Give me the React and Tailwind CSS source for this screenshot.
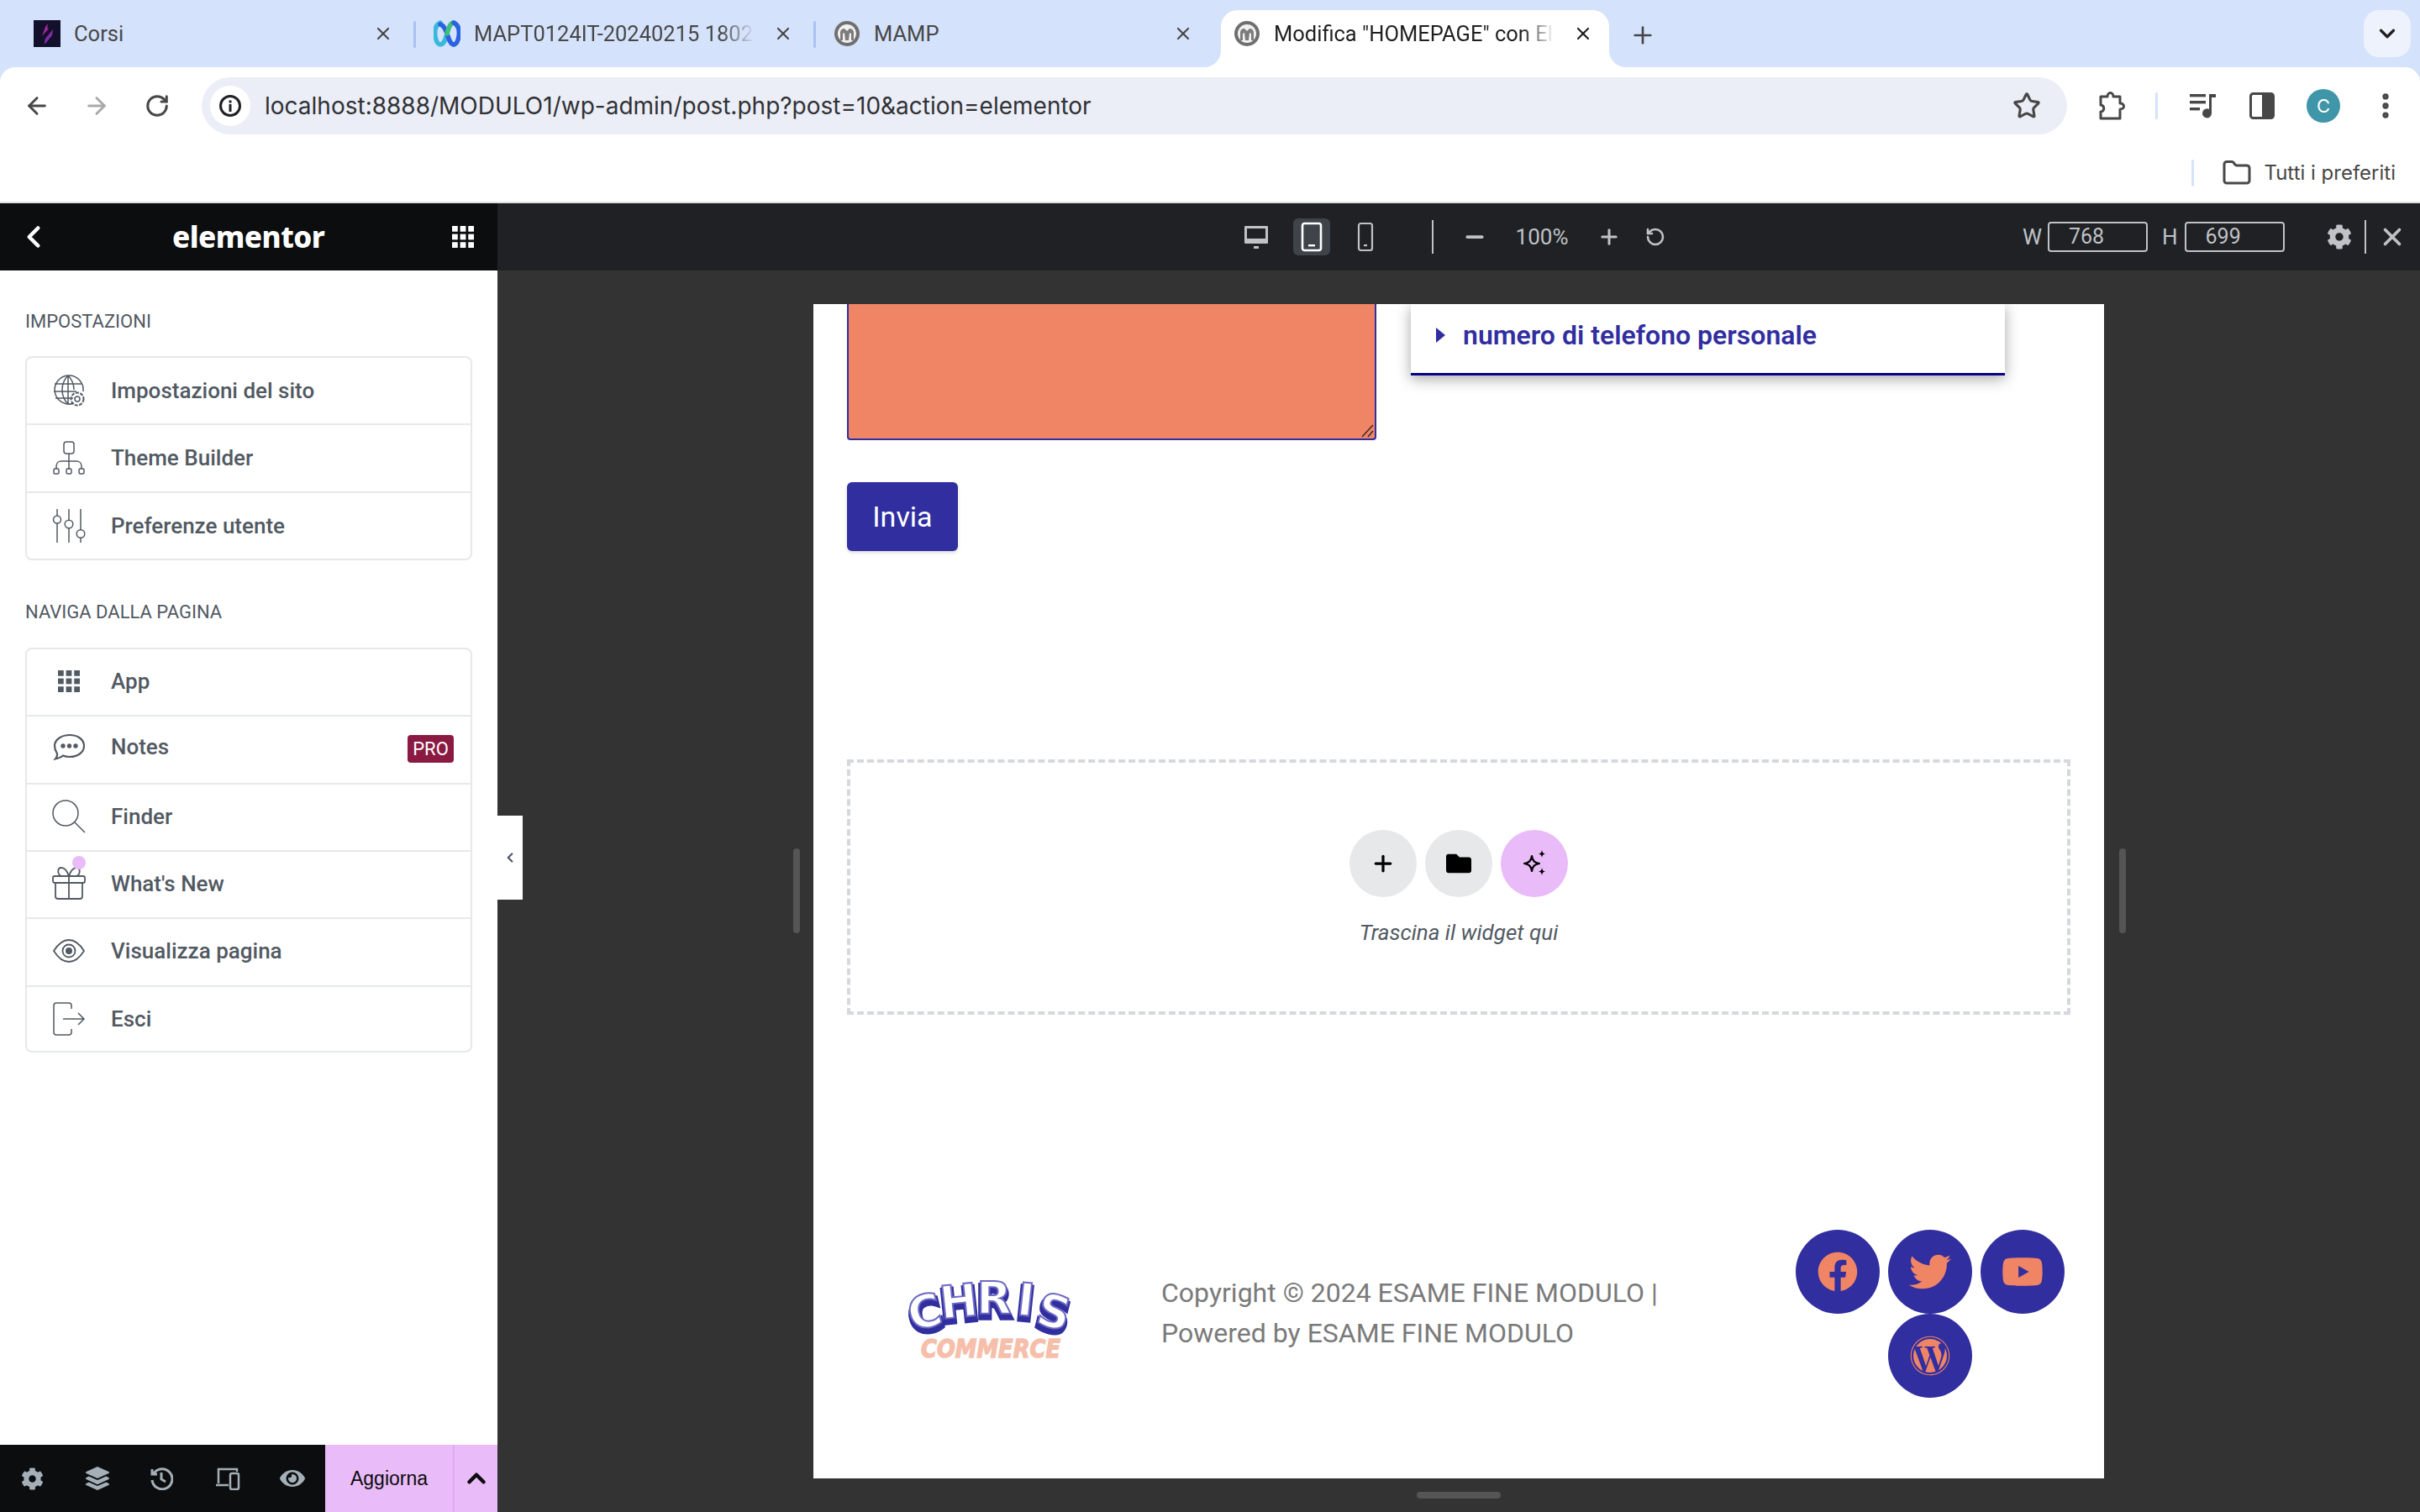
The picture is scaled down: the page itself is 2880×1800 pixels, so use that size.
import { ArrowLeft, ArrowRight, RotateCw, Star, ChevronDown, ChevronLeft, ChevronUp, Plus, Minus, X, RotateCcw, MoreVertical, Folder } from 'lucide-react'
import { FaFacebook, FaTwitter, FaYoutube, FaWordpress, FaFolder, FaCog, FaEye, FaLayerGroup } from 'react-icons/fa'

function CorsiIcon() {
  return (
    <svg width="32" height="32" viewBox="0 0 32 32">
      <rect width="32" height="32" fill="#12102a" />
      <path d="M14 8l3-4-1 7-6 8zM23 11l-1 7-9 11 1-7zM15 9l3 1-8 9z" fill="#a3299c" />
      <path d="M22 13l-1 6-8 9 1-6z" fill="#7a2bb0" />
    </svg>
  )
}

function WebexIcon() {
  return (
    <svg width="32" height="32" viewBox="0 0 32 32" fill="none">
      <path d="M8 3C2 6 1 12 2 19c1 6 3 10 6 10 4 0 6-5 8-13" stroke="#38b8dc" strokeWidth="5.500" strokeLinecap="round" />
      <path d="M8 5c4 1 6 5 8 11 2 6 4 13 8 13" stroke="#2a62e2" strokeWidth="5.500" strokeLinecap="round" />
      <path d="M16 16c2-7 4-13 8-13" stroke="#3fc07a" strokeWidth="5.500" strokeLinecap="round" />
      <path d="M24 3c6 3 7 9 6 16-1 6-3 10-6 10" stroke="#2a62e2" strokeWidth="5.500" strokeLinecap="round" />
    </svg>
  )
}

function MampIcon() {
  return (
    <svg width="32" height="32" viewBox="0 0 32 32">
      <circle cx="16" cy="16" r="15" fill="#6f6f6f" />
      <circle cx="16" cy="16" r="11" fill="#f1f1f1" />
      <path d="M8 24v-9c0-4 3-5 5-5l3 3 3-3c2 0 5 1 5 5v9h-3v-8l-2-1-1 9h-4l-1-9-2 1v8z" fill="#7c7c7c" />
    </svg>
  )
}

function Tab({ icon, title, active, fade }) {
  return (
    <div className={`relative flex h-[68px] w-[462px] shrink-0 items-start rounded-t-[20px] pl-[15px] pt-[12px] ${active ? 'bg-white text-[#1f1f1f]' : 'text-[#474747]'}`}>
      {active && (
        <>
          <div className="absolute bottom-0 left-[-20px] h-[20px] w-[20px] bg-white">
            <div className="h-full w-full rounded-br-[20px] bg-[#d5e2fb]" />
          </div>
          <div className="absolute bottom-0 right-[-20px] h-[20px] w-[20px] bg-white">
            <div className="h-full w-full rounded-bl-[20px] bg-[#d5e2fb]" />
          </div>
        </>
      )}
      <div className="flex h-[32px] w-[32px] shrink-0 items-center justify-center">{icon}</div>
      <div className={`ml-[16px] h-[32px] w-[334px] overflow-hidden whitespace-nowrap text-[25.5px] leading-[32px] ${fade ? '[mask-image:linear-gradient(to_right,black_88%,transparent)]' : ''}`}>{title}</div>
      <X className="ml-[22px] mt-[4px] shrink-0" size={24} strokeWidth={2.2} />
    </div>
  )
}

function TabDivider({ hidden }) {
  return <div className={`ml-[5px] mr-[6px] mt-[13px] h-[32px] w-[3px] shrink-0 rounded ${hidden ? '' : 'bg-[#a8c3f0]'}`} />
}

function TabStrip() {
  return (
    <div className="flex h-[80px] pl-[25px] pt-[12px]">
      <Tab icon={<CorsiIcon />} title="Corsi" />
      <TabDivider />
      <Tab icon={<WebexIcon />} title="MAPT0124IT-20240215 1802 - Webex" fade />
      <TabDivider />
      <Tab icon={<MampIcon />} title="MAMP" />
      <TabDivider hidden />
      <Tab icon={<MampIcon />} title={'Modifica "HOMEPAGE" con Elementor'} active fade />
      <Plus className="ml-[24px] mt-[14px] text-[#474747]" size={32} strokeWidth={2} />
      <div className="ml-auto mr-[11px] flex h-[56px] w-[56px] items-center justify-center rounded-[18px] bg-[#edf2fc]">
        <ChevronDown size={30} strokeWidth={2.6} className="text-[#1f1f1f]" />
      </div>
    </div>
  )
}

function Toolbar() {
  return (
    <div className="flex h-[80px] items-start rounded-t-[18px] bg-white pt-[12px] text-[#474747]">
      <div className="flex h-[68px] w-[240px] shrink-0 items-center">
        <ArrowLeft className="ml-[28px]" size={32} strokeWidth={2.2} />
        <ArrowRight className="ml-[39px] text-[#a9a9a9]" size={32} strokeWidth={2.2} />
        <RotateCw className="ml-[41px]" size={30} strokeWidth={2.4} />
      </div>
      <div className="flex h-[68px] w-[2220px] shrink-0 items-center rounded-full bg-[#ebeef7] pl-[10px]">
        <div className="flex h-[48px] w-[48px] items-center justify-center rounded-full bg-white">
          <svg width="28" height="28" viewBox="0 0 28 28" fill="none">
            <circle cx="14" cy="14" r="11.5" stroke="#202124" strokeWidth="3" />
            <rect x="12.5" y="12" width="3" height="9" fill="#202124" />
            <rect x="12.5" y="7.5" width="3" height="3" fill="#202124" />
          </svg>
        </div>
        <span className="ml-[17px] font-[Inter] text-[28px] text-[#303134]">localhost:8888/MODULO1/wp-admin/post.php?post=10&amp;action=elementor</span>
        <Star className="ml-auto mr-[31px]" size={34} strokeWidth={2.2} />
      </div>
      <div className="ml-[37px] mt-[14px] flex items-center">
        <svg width="34" height="36" viewBox="0 0 34 36" fill="none" stroke="#474747" strokeWidth="3" strokeLinejoin="round">
          <path d="M3 7h8c0-6 7-6 7 0h8v8c6 0 6 7 0 7v11H3v-8c5 0 5-8 0-8z" />
        </svg>
        <div className="ml-[34px] h-[32px] w-[3px] rounded bg-[#d5e2fb]" />
        <svg className="ml-[36px]" width="34" height="36" viewBox="0 0 34 36" fill="#474747">
          <rect x="2" y="4" width="19" height="3.4" />
          <rect x="2" y="12" width="19" height="3.4" />
          <rect x="2" y="20" width="12" height="3.4" />
          <path d="M25 4h8v4h-5v19a5.5 5.5 0 1 1-3-5z" />
        </svg>
        <svg className="ml-[39px]" width="30" height="32" viewBox="0 0 30 32">
          <rect x="1.5" y="1.5" width="27" height="29" rx="3" fill="none" stroke="#474747" strokeWidth="3" />
          <rect x="15" y="1.5" width="13.5" height="29" fill="#474747" />
        </svg>
        <div className="ml-[38px] flex h-[40px] w-[40px] items-center justify-center rounded-full bg-[#3f96a8] font-[Inter] text-[22px] text-white">C</div>
        <MoreVertical className="ml-[35px]" size={38} strokeWidth={2.6} />
      </div>
    </div>
  )
}

function BookmarksBar() {
  return (
    <div className="flex h-[80px] items-center justify-end bg-white pr-[29px] pt-[12px] text-[#474747]">
      <div className="h-[32px] w-[3px] rounded bg-[#d5e2fb]" />
      <Folder className="ml-[33px]" size={36} strokeWidth={2} />
      <span className="ml-[14px] font-[Inter] text-[24px] leading-[32px]">Tutti i preferiti</span>
    </div>
  )
}

function IconBox({ children, className = '' }) {
  return <div className={`flex h-[44px] w-[44px] shrink-0 items-center justify-center ${className}`}>{children}</div>
}

function PreviewBar() {
  return (
    <div className="flex h-[80px] shrink-0 items-center bg-[#1f2124] text-[#bfc2c7]">
      <IconBox className="ml-[881px]">
        <svg width="30" height="30" viewBox="0 0 30 30" fill="#bfc2c7">
          <path d="M2 2h26a1 1 0 0 1 1 1v19a1 1 0 0 1-1 1H2a1 1 0 0 1-1-1V3a1 1 0 0 1 1-1z" />
          <rect x="4" y="5" width="22" height="12" fill="#1f2124" />
          <rect x="12" y="26" width="6" height="3" />
        </svg>
      </IconBox>
      <IconBox className="ml-[22px] rounded-[6px] bg-[#3f444b]">
        <svg width="26" height="36" viewBox="0 0 26 36" fill="none">
          <rect x="2" y="2" width="22" height="32" rx="2.5" stroke="#fff" strokeWidth="2.6" />
          <rect x="9" y="27" width="8" height="2.4" fill="#fff" />
        </svg>
      </IconBox>
      <IconBox className="ml-[20px]">
        <svg width="20" height="36" viewBox="0 0 20 36" fill="none">
          <rect x="2" y="2" width="16" height="32" rx="2.5" stroke="#bfc2c7" strokeWidth="2.2" />
          <rect x="8" y="27" width="4" height="2.2" fill="#bfc2c7" />
        </svg>
      </IconBox>
      <div className="ml-[57px] h-[40px] w-[2px] bg-[#bfc2c7]" />
      <IconBox className="ml-[27px]"><Minus size={30} strokeWidth={3} /></IconBox>
      <div className="ml-[26px] w-[64px] text-center text-[26px]">100%</div>
      <IconBox className="ml-[26px]"><Plus size={28} strokeWidth={2.6} /></IconBox>
      <IconBox className="ml-[11px]"><RotateCcw size={24} strokeWidth={2.6} /></IconBox>
      <span className="ml-[415px] w-[20px] text-[26px]">W</span>
      <div className="ml-[10px] flex h-[36px] w-[119px] items-center rounded-[4px] border-2 border-[#bfc2c7] pl-[23px] text-[25px]">768</div>
      <span className="ml-[17px] text-[26px]">H</span>
      <div className="ml-[8px] flex h-[36px] w-[119px] items-center rounded-[4px] border-2 border-[#bfc2c7] pl-[23px] text-[25px]">699</div>
      <FaCog className="ml-[50px]" size={30} />
      <div className="ml-[15px] h-[40px] w-[2px] bg-[#bfc2c7]" />
      <X className="ml-[14px]" size={34} strokeWidth={2.6} />
    </div>
  )
}

const stroke = { fill: 'none', stroke: '#515962', strokeWidth: 1.5 }

function GlobeIcon() {
  return (
    <svg width="40" height="40" viewBox="0 0 40 40" {...stroke}>
      <path d="M26 35a17 17 0 1 1 11-14" />
      <path d="M19 2c-5 5-7 11-7 17s2 12 7 17M19 2c5 5 7 11 7 17M19 2v34M3 12h32M2 21h27M4 29h21" />
      <circle cx="30" cy="30" r="3" />
      <circle cx="30" cy="30" r="7.5" strokeDasharray="4 1.5" strokeWidth="2" />
    </svg>
  )
}

function SitemapIcon() {
  return (
    <svg width="40" height="40" viewBox="0 0 40 40" {...stroke}>
      <rect x="14" y="1" width="12" height="14" rx="3" />
      <path d="M20 15v19M5 33v-3c0-4 3-6 6-6h18c3 0 6 2 6 6v3" />
      <rect x="2" y="33" width="6" height="6" rx="1.5" />
      <rect x="17" y="33" width="6" height="6" rx="1.5" />
      <rect x="32" y="33" width="6" height="6" rx="1.5" />
    </svg>
  )
}

function SlidersIcon() {
  return (
    <svg width="40" height="40" viewBox="0 0 40 40" {...stroke}>
      <path d="M6 0v8M6 17v23M20 0v13M20 23v17M34 0v25M34 34v6" />
      <circle cx="6" cy="12.5" r="4.5" />
      <circle cx="20" cy="18" r="4.8" />
      <circle cx="34" cy="29.5" r="4.8" />
    </svg>
  )
}

function ChatIcon() {
  return (
    <svg width="40" height="40" viewBox="0 0 40 40" fill="none" stroke="#515962" strokeWidth="2.2">
      <path d="M21 4c9 0 17 5 17 13s-8 13-17 13c-3 0-6-.5-8-1.500-2 2-5 3-9 4 1.500-2 2.500-4 2-6.500C4 23 3 20 3 17 3 9 12 4 21 4z" />
      <circle cx="13" cy="17" r="1.600" fill="#515962" />
      <circle cx="20.500" cy="17" r="1.600" fill="#515962" />
      <circle cx="28" cy="17" r="1.600" fill="#515962" />
    </svg>
  )
}

function SearchIcon() {
  return (
    <svg width="40" height="40" viewBox="0 0 40 40" {...stroke}>
      <circle cx="16" cy="16" r="15" />
      <path d="M27 27l12 12" />
    </svg>
  )
}

function GiftIcon() {
  return (
    <svg width="40" height="40" viewBox="0 0 40 40" fill="none" stroke="#515962" strokeWidth="1.800">
      <rect x="1" y="11" width="38" height="8" rx="2" />
      <path d="M4 19v16a3 3 0 0 0 3 3h26a3 3 0 0 0 3-3V19M20 11v27" />
      <path d="M20 11c-2-6-5-10-9-10-5 0-5 8 0 10M20 11c2-6 5-10 9-10 5 0 5 8 0 10" />
    </svg>
  )
}

function EyeIcon() {
  return (
    <svg width="40" height="40" viewBox="0 0 40 40" fill="none" stroke="#515962" strokeWidth="1.800">
      <path d="M2 20c5-8 11-13 18-13s13 5 18 13c-5 8-11 13-18 13S7 28 2 20z" />
      <circle cx="20" cy="20" r="7.500" />
      <circle cx="20" cy="20" r="4" fill="#515962" stroke="none" />
    </svg>
  )
}

function ExitIcon() {
  return (
    <svg width="40" height="40" viewBox="0 0 40 40" {...stroke}>
      <path d="M23 8V4a3 3 0 0 0-3-3H5a3 3 0 0 0-3 3v32a3 3 0 0 0 3 3h15a3 3 0 0 0 3-3v-4" />
      <path d="M13 20h25M31 13l7 7-7 7" />
    </svg>
  )
}

function AppsIcon({ color = '#515962', size = 26 }) {
  const cells = []
  for (let y = 0; y < 3; y++) for (let x = 0; x < 3; x++) cells.push(<rect key={`${x}-${y}`} x={x * 10} y={y * 10} width="7" height="7" fill={color} />)
  return <svg width={size} height={size} viewBox="0 0 27 27">{cells}</svg>
}

function MenuRow({ icon, label, last, badge, dot, raised, lift }) {
  return (
    <div className={`relative flex flex-1 items-center pl-[30px] pr-[20px] ${last ? '' : 'border-b-2 border-[#e6e8ea]'} ${lift ? 'pb-[2px]' : ''}`}>
      <div className="relative flex h-[40px] w-[40px] shrink-0 items-center justify-center">
        {icon}
        {dot && <div className="absolute left-[24px] top-[-13px] h-[16px] w-[16px] rounded-full bg-[#e9bbf9]" />}
      </div>
      <span className={`ml-[30px] text-[26px] font-medium leading-[32px] text-[#515962] ${raised ? 'mb-[4px]' : ''}`}>{label}</span>
      {badge && <span className="ml-auto flex h-[33px] w-[55px] items-center justify-center rounded-[4px] bg-[#8a1a42] text-[22px] text-white">{badge}</span>}
    </div>
  )
}

function Sidebar() {
  return (
    <div className="flex w-[592px] shrink-0 flex-col bg-white">
      <div className="flex h-[80px] shrink-0 items-center bg-[#0c0d0e] pl-[19px] pr-[28px] text-white">
        <ChevronLeft size={42} strokeWidth={2.6} />
        <span className="ml-[144px] font-['Noto_Sans'] text-[35px] font-extrabold leading-[40px] tracking-[-0.5px]">elementor</span>
        <div className="ml-auto"><AppsIcon color="#ffffff" /></div>
      </div>
      <div className="ml-[30px] mt-[48px] text-[22px] leading-[26px] text-[#515962]">IMPOSTAZIONI</div>
      <div className="ml-[30px] mt-[28px] flex h-[243px] w-[532px] flex-col rounded-[8px] border-2 border-[#e6e8ea]">
        <MenuRow icon={<GlobeIcon />} label="Impostazioni del sito" />
        <MenuRow icon={<SitemapIcon />} label="Theme Builder" />
        <MenuRow icon={<SlidersIcon />} label="Preferenze utente" last />
      </div>
      <div className="ml-[30px] mt-[49px] text-[22px] leading-[26px] text-[#515962]">NAVIGA DALLA PAGINA</div>
      <div className="ml-[30px] mt-[29px] flex h-[482px] w-[532px] flex-col rounded-[8px] border-2 border-[#e6e8ea]">
        <MenuRow icon={<AppsIcon />} label="App" lift />
        <MenuRow icon={<ChatIcon />} label="Notes" badge="PRO" raised lift />
        <MenuRow icon={<SearchIcon />} label="Finder" lift />
        <MenuRow icon={<GiftIcon />} label="What's New" dot lift />
        <MenuRow icon={<EyeIcon />} label="Visualizza pagina" lift />
        <MenuRow icon={<ExitIcon />} label="Esci" last />
      </div>
      <div className="mt-auto flex h-[80px] shrink-0 items-center bg-[#0c0d0e] text-[#a4afb7]">
        <FaCog className="ml-[25px]" size={27} />
        <FaLayerGroup className="ml-[50px]" size={28} />
        <svg className="ml-[48px]" width="28" height="28" viewBox="0 0 28 28" fill="none" stroke="#a4afb7" strokeWidth="3">
          <path d="M5 8a12 12 0 1 1-2 8M3 3v6h6M14 7v8l5 3" />
        </svg>
        <svg className="ml-[50px]" width="30" height="28" viewBox="0 0 30 28" fill="none" stroke="#a4afb7" strokeWidth="2.500">
          <path d="M4 20V3h22v3M1 22h15" />
          <rect x="18" y="8" width="10" height="19" rx="2" />
        </svg>
        <FaEye className="ml-[47px]" size={30} />
        <div className="ml-[24px] flex h-full flex-1 items-center bg-[#e9bbf9] text-[#0c0d0e]">
          <span className="w-[152px] text-center font-['Liberation_Sans'] text-[23px]">Aggiorna</span>
          <div className="flex h-full flex-1 items-center justify-center border-l-2 border-[#dfa9f2]">
            <ChevronUp size={34} strokeWidth={3.2} />
          </div>
        </div>
      </div>
    </div>
  )
}

function Logo() {
  const letters = [
    ['C', 28, 66, -14],
    ['H', 66, 54, -6],
    ['R', 106, 50, 0],
    ['I', 142, 52, 6],
    ['S', 173, 66, 14],
  ]
  return (
    <svg width="200" height="106" viewBox="0 0 200 106" className="font-['DejaVu_Sans']">
      {letters.map(([ch, x, y, r]) => (
        <text key={`s${x}`} x={x} y={y + 5} transform={`rotate(${r} ${x} ${y})`} textAnchor="middle" fontSize="54" fontWeight="700" fill="#312e9f" stroke="#312e9f" strokeWidth="6">{ch}</text>
      ))}
      {letters.map(([ch, x, y, r]) => (
        <text key={x} x={x} y={y} transform={`rotate(${r} ${x} ${y})`} textAnchor="middle" fontSize="54" fontWeight="700" fill="#ffffff" stroke="#6d6ac4" strokeWidth="2">{ch}</text>
      ))}
      <text x="102" y="102" textAnchor="middle" fontSize="30" fontWeight="700" fontStyle="italic" fill="#f6bfab" stroke="#f6bfab" strokeWidth="1.500" textLength="166" lengthAdjust="spacingAndGlyphs">COMMERCE</text>
    </svg>
  )
}

function Social({ icon }) {
  return <div className="flex h-[100px] w-[100px] items-center justify-center rounded-full bg-[#312e9f] text-[#f08566]">{icon}</div>
}

function Preview() {
  return (
    <div className="relative mx-auto mt-[40px] h-[1398px] w-[1536px] bg-white">
      <div className="h-full overflow-hidden px-[40px]">
        <div className="flex items-start">
          <div className="relative h-[162px] w-[630px] rounded-b-[4px] border-2 border-t-0 border-[#312e9f] bg-[#f08566]">
            <svg className="absolute bottom-[1px] right-[1px]" width="16" height="16" viewBox="0 0 16 16" stroke="#3a2a2a" strokeWidth="1.500">
              <path d="M2 15L15 1M9 15l6-7" />
            </svg>
          </div>
          <div className="ml-[41px] flex h-[85px] w-[707px] items-center border-b-[3px] border-[#0a0088] bg-white pb-[8px] pl-[30px] shadow-[0_4px_16px_rgba(0,0,0,0.35)]">
            <div className="h-0 w-0 border-y-[9px] border-l-[11px] border-y-transparent border-l-[#312e9f]" />
            <span className="ml-[21px] text-[32px] font-semibold text-[#312e9f]">numero di telefono personale</span>
          </div>
        </div>
        <div className="mt-[50px] flex h-[82px] w-[132px] items-center justify-center rounded-[6px] bg-[#312e9f] text-[34px] text-white shadow-[0_2px_4px_rgba(0,0,0,0.15)]">Invia</div>
        <div className="mt-[248px] flex h-[304px] w-[1456px] flex-col items-center border-4 border-dashed border-[#d5d8dc] pt-[80px]">
          <div className="flex gap-[10px]">
            <div className="flex h-[80px] w-[80px] items-center justify-center rounded-full bg-[#e6e8ea] text-black"><Plus size={30} strokeWidth={2.6} /></div>
            <div className="flex h-[80px] w-[80px] items-center justify-center rounded-full bg-[#e6e8ea] text-black"><FaFolder size={30} /></div>
            <div className="flex h-[80px] w-[80px] items-center justify-center rounded-full bg-[#e9bbf9]">
              <svg width="32" height="32" viewBox="0 0 32 32">
                <path d="M13 7c1 6 3 8 9 9-6 1-8 3-9 9-1-6-3-8-9-9 6-1 8-3 9-9z" fill="none" stroke="#000" strokeWidth="2.200" strokeLinejoin="round" />
                <path d="M25 0c.5 3 1.500 4 4 4.500-2.500.5-3.500 1.500-4 4.500-.5-3-1.500-4-4-4.500 2.500-.5 3.500-1.500 4-4.500zM25 21c.5 3 1.500 4 4 4.500-2.500.5-3.500 1.500-4 4.500-.5-3-1.500-4-4-4.500 2.500-.5 3.500-1.500 4-4.500z" fill="#000" />
              </svg>
            </div>
          </div>
          <div className="mt-[26px] text-[26px] italic leading-[32px] text-[#515962]">Trascina il widget qui</div>
        </div>
        <div className="mt-[256px] flex items-start">
          <div className="ml-[69px] mt-[50px] shrink-0"><Logo /></div>
          <div className="ml-[105px] mt-[51px] w-[640px] shrink-0 text-[32px] leading-[48px] text-[#7a7a7a]">
            Copyright © 2024 ESAME FINE MODULO | Powered by ESAME FINE MODULO
          </div>
          <div className="ml-[115px] flex w-[320px] flex-wrap justify-center gap-x-[10px]">
            <Social icon={<FaFacebook size={48} />} />
            <Social icon={<FaTwitter size={50} />} />
            <Social icon={<FaYoutube size={50} />} />
            <Social icon={<FaWordpress size={48} />} />
          </div>
        </div>
      </div>
      <div className="absolute left-[-24px] top-[648px] h-[101px] w-[8px] rounded bg-[#555555]" />
      <div className="absolute right-[-26px] top-[648px] h-[101px] w-[8px] rounded bg-[#555555]" />
      <div className="absolute bottom-[-24px] left-[718px] h-[8px] w-[100px] rounded bg-[#555555]" />
    </div>
  )
}

export default function App() {
  return (
    <div className="flex h-[1800px] w-[2880px] flex-col overflow-hidden bg-[#d5e2fb] font-[Roboto,sans-serif]">
      <TabStrip />
      <Toolbar />
      <BookmarksBar />
      <div className="h-[2px] shrink-0 bg-[#dfe1e5]" />
      <div className="relative flex min-h-0 flex-1">
        <Sidebar />
        <div className="flex min-w-0 flex-1 flex-col bg-[#333333]">
          <PreviewBar />
          <Preview />
        </div>
        <div className="absolute left-[592px] top-[729px] flex h-[100px] w-[30px] items-center justify-center bg-white text-[#515962]">
          <ChevronLeft size={18} strokeWidth={3} />
        </div>
      </div>
    </div>
  )
}
